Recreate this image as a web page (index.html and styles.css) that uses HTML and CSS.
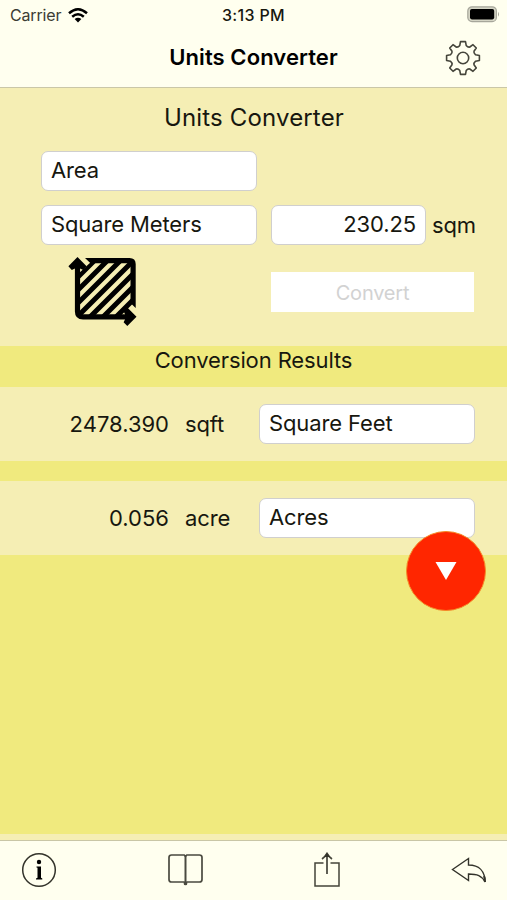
FILE: index.html
```html
<!DOCTYPE html>
<html lang="en">
<head>
<meta charset="utf-8">
<title>Units Converter</title>
<link rel="stylesheet" href="styles.css">
</head>
<body>
<div class="app">
  <header class="top">
    <div class="status">
      <div class="carrier"><span>Carrier</span>
        <svg width="20" height="15" viewBox="0 0 20 15"><g fill="none" stroke="#000" stroke-width="2.5"><path d="M1 5.3Q10-2.7 19 5.3"/><path d="M4.2 8.8Q10 3.8 15.8 8.8"/></g><path d="M6.6 11.1Q10 8.2 13.4 11.1L10 14.6Z"/></svg>
      </div>
      <div class="time">3:13 PM</div>
      <svg class="battery" width="32" height="17" viewBox="0 0 32 17"><rect x=".8" y=".8" width="28.6" height="14.8" rx="4.2" fill="#d5d5c5" stroke="#a7a79b" stroke-width="1.2"/><rect x="3" y="3" width="24.2" height="10.4" rx="1.8"/><path d="M31 5.7q2 2.5 0 5Z" fill="#a7a79b"/></svg>
    </div>
    <div class="nav">
      <h1>Units Converter</h1>
      <svg class="gear" width="36" height="36" viewBox="-18 -18 36 36" fill="none" stroke="#45453b" stroke-width="1.6" stroke-linejoin="round"><path d="M-2.5-16.4H2.5L3.2-12.6Q5-10.4 6.8-11L10-13.3L13.3-10L11-6.8Q10.4-5 12.6-3.2L16.4-2.5V2.5L12.6 3.2Q10.4 5 11 6.8L13.3 10L10 13.3L6.8 11Q5 10.4 3.2 12.6L2.5 16.4H-2.5L-3.2 12.6Q-5 10.4-6.8 11L-10 13.3L-13.3 10L-11 6.8Q-10.4 5-12.6 3.2L-16.4 2.5V-2.5L-12.6-3.2Q-10.4-5-11-6.8L-13.3-10L-10-13.3L-6.8-11Q-5-10.4-3.2-12.6Z"/><circle r="5.7"/></svg>
    </div>
  </header>
  <main>
    <section class="form">
      <h2>Units Converter</h2>
      <div class="field">Area</div>
      <div class="row">
        <div class="field unit">Square Meters</div>
        <div class="field amount">230.25</div>
        <span class="suffix">sqm</span>
      </div>
      <div class="row actions">
        <svg class="area" width="70" height="70" viewBox="0 0 70 70">
          <defs><clipPath id="inside"><path d="M9 17L23 4H64V48L53 60H9Z"/></clipPath></defs>
          <g clip-path="url(#inside)" stroke="#000" stroke-width="5"><path d="M0 29L29 0M0 42L42 0M0 55L55 0M0 68L68 0M11 70L81 0M24 70L94 0M37 70L107 0"/></g>
          <path d="M8.5 6V54.5Q8.5 59.8 14 59.8H60" fill="none" stroke="#000" stroke-width="5.2"/>
          <path d="M16 1H60.5Q66.7 1 66.7 7V51L61.5 46V8Q61.5 6.3 60 6.3H21.5Z"/>
          <path d="M8.5 0L17.6 9.3L14.2 13L11 11.5H6L2.8 13L-.6 9.3ZM67.5 59.8L58.3 69L54.6 65.3L56 62.4V57.2L54.6 54.3L58.3 50.6Z"/>
        </svg>
        <button disabled>Convert</button>
      </div>
    </section>
    <h3>Conversion Results</h3>
    <section class="result"><span class="value">2478.390</span><span class="abbr">sqft</span><div class="field">Square Feet</div></section>
    <section class="result"><span class="value">0.056</span><span class="abbr">acre</span><div class="field">Acres</div>
      <div class="fab"><svg width="22" height="20" viewBox="0 0 22 20"><path d="M.5 1H21.5L11 19Z" fill="#fff"/></svg></div>
    </section>
  </main>
  <footer>
    <svg width="36" height="36" viewBox="0 0 36 36"><circle cx="18" cy="18" r="16.3" fill="none" stroke="#33332b" stroke-width="1.5"/><circle cx="18" cy="10" r="2.2"/><path d="M15.5 14.4H20V25.8L21.3 26.5V27.5H15V26.5L16.5 25.8V15.8L15.5 15.4Z"/></svg>
    <svg width="36" height="36" viewBox="0 0 36 36" fill="none" stroke="#4a4a40" stroke-width="1.7"><path d="M18.5 4.3L17.2 3H4.5Q2 3 2 5.5V27.5Q2 30 4.5 30H17L18.5 31L20 30H32.5Q35 30 35 27.5V5.5Q35 3 32.5 3H19.8Z"/><path d="M18.5 4V31" stroke-width="2"/><circle cx="18.5" cy="31.4" r="1" fill="#222"/></svg>
    <svg width="28" height="36" viewBox="0 0 28 36" fill="none" stroke="#44443a" stroke-width="1.5"><path d="M10.5 11H2V34H26V11H17.5"/><path d="M14 22V2M9 7Q12 5 14 1.5Q16 5 19 7" stroke-width="1.7"/><path d="M11 5L14 1L17 5Z" fill="#33332b" stroke="none"/></svg>
    <svg width="36" height="36" viewBox="0 0 36 36" fill="none" stroke="#33332b" stroke-width="1.4"><path d="M1.5 17.5L17.5 6.5V13C28 13 34 19 34 30C31 23.5 26 22 17.5 22V28.5Z"/><path d="M34 30C34 28 34 26 33 24" stroke-width="2"/></svg>
  </footer>
</div>
</body>
</html>
```
FILE: styles.css
```css
* { box-sizing: border-box; }
body {
  margin: 0;
  font: 22px/28px Inter, "Liberation Sans", sans-serif;
  letter-spacing: -.12px;
  color: #17170f;
}
svg { display: block; flex: none; }
h1, h2, h3 { margin: 0; font-weight: 400; }
.app {
  width: 507px;
  height: 900px;
  display: flex;
  flex-direction: column;
  overflow: hidden;
  background: #f5eeb4;
}
.top {
  height: 88px;
  background: #ffffef;
  border-bottom: 1px solid #cac7a8;
}
.status {
  height: 30px;
  padding: 0 8px 0 10px;
  display: grid;
  grid-template-columns: 1fr 70px 1fr;
  align-items: center;
  font-size: 16px;
  line-height: 20px;
}
.carrier { display: flex; gap: 7px; align-items: center; color: #3c3c34; letter-spacing: -.15px; }
.time { margin-left: -2px; text-align: center; font-weight: 500; letter-spacing: .35px; white-space: nowrap; }
.battery { justify-self: end; margin-top: -1px; }
.nav {
  height: 56px;
  padding: 0 26px 0 62px;
  display: flex;
  align-items: center;
}
.nav h1 { flex: 1; text-align: center; font-size: 22px; font-weight: 600; line-height: 28px; color: #000; letter-spacing: .08px; margin-top: -2px; }
main { flex: 1; background: #f0ea7e; border-bottom: 6px solid #f5eeb4; }
.form { height: 258px; padding: 15px 0 0 41px; background: #f5eeb4; }
.form h2 { margin: 0 40px 19px 0; text-align: center; font-size: 24px; line-height: 29px; letter-spacing: .15px; }
.field {
  width: 216px;
  height: 40px;
  padding: 4px 9px;
  border: 1px solid #d0cfce;
  border-radius: 7px;
  background: #fff;
  white-space: nowrap;
}
.row { display: flex; margin-top: 14px; }
.amount { width: 155px; margin-left: 14px; text-align: right; }
.suffix { margin: 6px 0 0 6px; }
.actions { margin-top: 12px; align-items: flex-start; }
.area { margin-left: 28px; overflow: visible; }
button {
  width: 203px;
  height: 40px;
  margin: 15px 0 0 132px;
  padding: 1px 0 0;
  border: 0;
  background: #fff;
  color: #d2d2d2;
  font: 20px/40px Inter, "Liberation Sans", sans-serif;
  letter-spacing: -.2px;
}
h3 { height: 41px; font-size: 22px; line-height: 29px; text-align: center; }
.result {
  position: relative;
  height: 74px;
  margin-bottom: 20px;
  display: flex;
  align-items: center;
  background: #f5eeb4;
}
.value { width: 169px; text-align: right; letter-spacing: 0; }
.abbr { width: 74px; margin-left: 16px; }
.fab {
  position: absolute;
  left: 406px;
  top: 50px;
  width: 80px;
  height: 80px;
  border: 1px solid #f58b28;
  border-radius: 50%;
  background: #ff2600;
  display: flex;
  align-items: center;
  justify-content: center;
}
footer {
  height: 60px;
  padding: 11px 20px 12px 21px;
  border-top: 1px solid #c9c6a6;
  background: #ffffef;
  display: flex;
  justify-content: space-between;
}
```
